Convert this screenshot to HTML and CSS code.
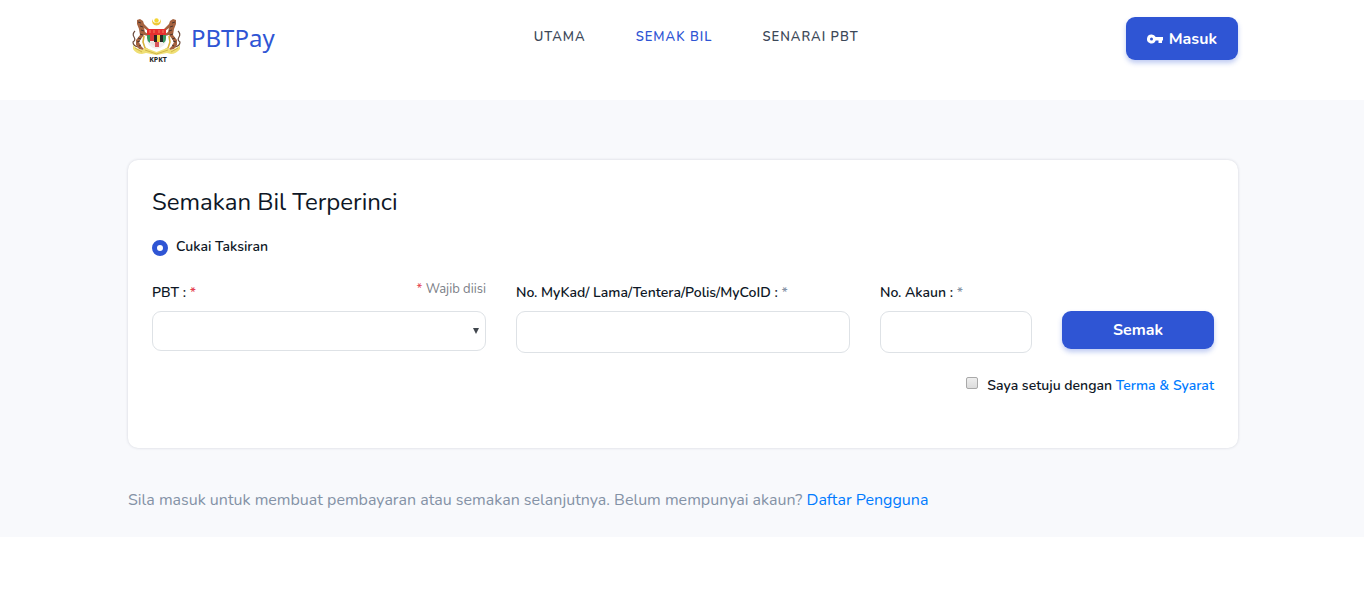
FILE: index.html
```html
<!DOCTYPE html>
<html lang="ms">
<head>
<meta charset="utf-8">
<meta name="viewport" content="width=device-width, initial-scale=1">
<title>PBTPay</title>
<link rel="stylesheet" href="styles.css">
</head>
<body>
<header class="header">
  <div class="container header-row">
    <a class="brand" href="#">
      <svg class="emblem" viewBox="0 0 54 50" role="img" aria-label="KPKT">
        <path d="M22.500 5a4.500 4.500 0 1 0 8 0a3.500 3.500 0 1 1-8 0z" fill="#eec93c"/>
        <circle cx="26.500" cy="6.500" r="2.200" fill="#f3d535"/>
        <g id="tiger">
          <path d="M5 17Q2 20 4 23T3 28Q3 32 8 33" fill="none" stroke="#6b4a3c" stroke-width="1.200"/>
          <path d="M7 6l3-1 3 2 1 3 5 5-1 2-4-3 1 4 3 2v2l-4-1-3 4-2 3 2 4 3 3-1 1-4-1-3-4v-5l4-5-1-6-2-5z" fill="#a5623f"/>
          <path d="M8 8l3 1M10 12l3 1M11 16l3 1M10 20l3 1M8 24l3 1M7 28l3-1M9 32l2-1" stroke="#3d302d" stroke-width=".9"/>
          <path d="M14 22l-1 6 2 6 3 2" fill="none" stroke="#d9b23c" stroke-width="1.600"/>
        </g>
        <use href="#tiger" transform="matrix(-1 0 0 1 53 0)"/>
        <path d="M17 15h19v12q-1 6-9.500 8q-8.500-2-9.500-8z" fill="#f1eeec"/>
        <path d="M17 15h19v6H17z" fill="#e6302f"/>
        <path d="M20 16v3M24 16v3M29 16v3M33 16v3" stroke="#f39a6c" stroke-width=".8"/>
        <path d="M17 21h3v8q-3-2-3-5z" fill="#38985c"/>
        <path d="M20 21h4v6h-4z" fill="#d93a3c"/>
        <path d="M24 21h3v7h-3z" fill="#252525"/>
        <path d="M27 21h3v7h-3z" fill="#f0ce3d"/>
        <path d="M30 21h3v7h-3z" fill="#262626"/>
        <path d="M33 21h3v3q0 4-3 5z" fill="#3a9a60"/>
        <path d="M20 28h5v4l-4-2z" fill="#e9e2de"/>
        <path d="M25 28h4v5h-4z" fill="#d9555c"/>
        <path d="M3 31q3 4 9 5l4-2 10.500 4L37 34l4 2q6-1 9-5v4q-4 5-9 5l-4-1-10.500 2-10.500-2-4 1Q6 40 3 35z" fill="#efdf74"/>
        <path d="M15 36l11.500 4L38 36M12 38l-7-4M41 38l7-4" fill="none" stroke="#c3a238" stroke-width=".7"/>
        <text class="emblem-text" x="28" y="48" text-anchor="middle">KPKT</text>
      </svg>
      <span class="brand-name">PBTPay</span>
    </a>
    <nav class="nav">
      <a href="#">UTAMA</a>
      <a class="active" href="#">SEMAK BIL</a>
      <a href="#">SENARAI PBT</a>
    </nav>
    <button class="btn btn-login" type="button">
      <svg class="key" viewBox="0 0 16 10" aria-hidden="true"><path fill="#fff" fill-rule="evenodd" d="M4.500 0.500a4.500 4.500 0 0 1 4.200 2.500H16v3.500h-1v2.500h-3.500V6.500H8.700A4.500 4.500 0 1 1 4.500 .5zm0 3a1.500 1.500 0 1 0 0 3a1.500 1.500 0 0 0 0-3z"/></svg>
      Masuk
    </button>
  </div>
</header>
<main class="main">
  <div class="container">
    <form class="card">
      <h1>Semakan Bil Terperinci</h1>
      <label class="type"><input class="radio" type="radio" name="jenis" checked>Cukai Taksiran</label>
      <div class="fields">
        <div class="field wide">
          <div class="label-row">
            <label for="pbt">PBT : <span class="req">*</span></label>
            <span class="note"><span class="req">*</span> Wajib diisi</span>
          </div>
          <div class="select-wrap">
            <select id="pbt"><option></option></select>
            <svg class="arrow" viewBox="0 0 6 6" aria-hidden="true"><path d="M0 0h6L3 6z" fill="#40464d"/></svg>
          </div>
        </div>
        <div class="field wide">
          <div class="label-row"><label for="mykad">No. MyKad/ Lama/Tentera/Polis/MyCoID : <span class="star">*</span></label></div>
          <input class="text" id="mykad" type="text">
        </div>
        <div class="field">
          <div class="label-row"><label for="akaun">No. Akaun : <span class="star">*</span></label></div>
          <input class="text" id="akaun" type="text">
        </div>
        <div class="field action"><button class="btn btn-submit" type="button">Semak</button></div>
      </div>
      <div class="agree">
        <input class="check" id="setuju" type="checkbox">
        <div><label for="setuju">Saya setuju dengan</label> <a href="#">Terma &amp; Syarat</a></div>
      </div>
    </form>
    <p class="hint">Sila masuk untuk membuat pembayaran atau semakan selanjutnya. Belum mempunyai akaun? <a href="#">Daftar Pengguna</a></p>
  </div>
</main>
</body>
</html>
```
FILE: styles.css
```css
* { box-sizing: border-box; }
body {
  margin: 0;
  background: #fff;
  color: #0e1726;
  font-family: Nunito, "Open Sans", "Noto Sans", sans-serif;
  font-size: 16px;
  line-height: 24px;
}
a { color: #007bff; text-decoration: none; }
button, input, select { font: inherit; }
.container { max-width: 1140px; margin: 0 auto; padding: 0 14px 0 16px; }

.header { padding: 14px 0 36px; }
.header-row { display: flex; justify-content: space-between; align-items: flex-start; }
.brand { display: flex; align-items: flex-start; gap: 7px; padding-left: 2px; color: #2f55d4; }
.emblem { width: 54px; height: 50px; }
.emblem-text { font-family: "Open Sans", sans-serif; font-size: 7px; font-weight: 700; fill: #222; }
.brand-name { padding-top: 8px; font-family: "Noto Sans", sans-serif; font-size: 24px; line-height: 32px; }
.nav { display: flex; gap: 50px; padding: 11px 8px 0 0; font-size: 13px; font-weight: 600; letter-spacing: 1px; }
.nav a { color: #3c4858; }
.nav .active { color: #2f55d4; }
.btn {
  border: 0;
  border-radius: 9px;
  background: #2f55d4;
  color: #fff;
  font-weight: 700;
  box-shadow: 0 3px 5px rgba(47, 85, 212, .3);
}
.btn-login { display: flex; align-items: center; gap: 6px; margin-top: 3px; padding: 0 21px; height: 43px; }
.key { width: 16px; height: 10px; }

.main { background: #f8f9fc; padding: 60px 0 25px; }
.card {
  padding: 24px 24px 50px;
  border-radius: 10px;
  background: #fff;
  box-shadow: 0 0 3px rgba(60, 72, 88, .2);
}
h1 { margin: 0 0 16px; font-size: 24px; line-height: 36px; font-weight: 400; }
.type { display: flex; align-items: center; gap: 8px; height: 22px; font-size: 14px; font-weight: 600; }
.radio { appearance: none; margin: 2px 0 0; width: 16px; height: 16px; border: 5px solid #2f55d4; border-radius: 50%; background: #fff; }
.fields { display: grid; grid-template-columns: repeat(12, 1fr); column-gap: 30px; margin-top: 20px; }
.field { grid-column: span 2; }
.wide { grid-column: span 4; }
.label-row { display: flex; justify-content: space-between; height: 33px; font-size: 14px; line-height: 29px; font-weight: 600; }
.note { font-size: 13px; line-height: 22px; font-weight: 400; color: #7b8087; }
.req { color: #e43f52; }
.star { color: #8492a6; }
.text, select { display: block; width: 100%; height: 42px; padding: 0 12px; border: 1px solid #dee2e6; border-radius: 9px; background: #fff; color: #3c4858; }
.select-wrap { position: relative; }
select { height: 40px; appearance: none; }
.arrow { position: absolute; top: 17px; right: 7px; width: 6px; height: 6px; pointer-events: none; }
.action { padding-top: 33px; }
.btn-submit { width: 100%; height: 38px; }
.agree { display: flex; justify-content: flex-end; gap: 9px; margin-top: 21px; font-size: 14px; font-weight: 600; }
.check { appearance: none; margin: 3px 0 0; width: 12px; height: 12px; border: 1px solid #a9a9a9; border-radius: 2px; background: linear-gradient(#eee, #dcdcdc); }
.hint { margin: 40px 0 0; color: #8492a6; }
```
